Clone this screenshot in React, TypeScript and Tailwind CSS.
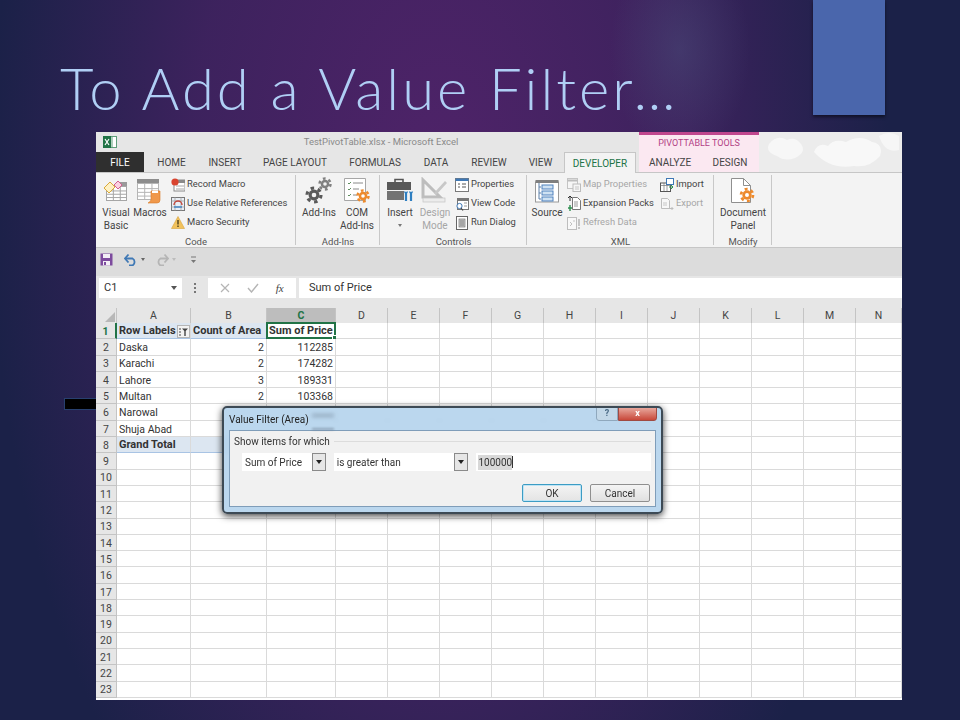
import { ReactNode } from 'react';

const ui = 'font-["Roboto","Noto_Sans",sans-serif]';

const tabs = [
  { label: 'HOME', w: 'w-[55px]' },
  { label: 'INSERT', w: 'w-[52px]' },
  { label: 'PAGE LAYOUT', w: 'w-[88px]' },
  { label: 'FORMULAS', w: 'w-[72px]' },
  { label: 'DATA', w: 'w-[50px]' },
  { label: 'REVIEW', w: 'w-[56px]' },
  { label: 'VIEW', w: 'w-[47px]' },
];

const cols = [
  { name: 'A', w: 'w-[74px]' },
  { name: 'B', w: 'w-[76px]' },
  { name: 'C', w: 'w-[69px]' },
  { name: 'D', w: 'w-[52px]' },
  { name: 'E', w: 'w-[52px]' },
  { name: 'F', w: 'w-[52px]' },
  { name: 'G', w: 'w-[52px]' },
  { name: 'H', w: 'w-[52px]' },
  { name: 'I', w: 'w-[52px]' },
  { name: 'J', w: 'w-[52px]' },
  { name: 'K', w: 'w-[52px]' },
  { name: 'L', w: 'w-[52px]' },
  { name: 'M', w: 'w-[52px]' },
  { name: 'N', w: 'w-[46px]' },
];

const data: Record<number, string[]> = {
  1: ['Row Labels', 'Count of Area', 'Sum of Price'],
  2: ['Daska', '2', '112285'],
  3: ['Karachi', '2', '174282'],
  4: ['Lahore', '3', '189331'],
  5: ['Multan', '2', '103368'],
  6: ['Narowal', '', ''],
  7: ['Shuja Abad', '', ''],
  8: ['Grand Total', '', ''],
};

const rows = Array.from({ length: 23 }, (_, i) => i + 1);

function Gear({ x, y, r, fill, hole = '#f3f3f3' }: { x: number; y: number; r: number; fill: string; hole?: string }) {
  return (
    <g>
      <circle cx={x} cy={y} r={r} fill="none" stroke={fill} strokeWidth={r * 0.45} strokeDasharray={`${r * 0.5} ${r * 0.55}`} />
      <circle cx={x} cy={y} r={r * 0.78} fill={fill} />
      <circle cx={x} cy={y} r={r * 0.33} fill={hole} />
    </g>
  );
}

function SheetLines({ x, y, w, h, color = '#a6a6a6' }: { x: number; y: number; w: number; h: number; color?: string }) {
  return (
    <g stroke={color} strokeWidth="1" fill="#fff">
      <rect x={x + 0.5} y={y + 0.5} width={w - 1} height={h - 1} />
      <path d={`M${x} ${y + h * 0.33}H${x + w}M${x} ${y + h * 0.55}H${x + w}M${x} ${y + h * 0.77}H${x + w}M${x + w * 0.35} ${y}V${y + h}M${x + w * 0.68} ${y}V${y + h}`} />
    </g>
  );
}

function VisualBasicIcon() {
  return (
    <svg width="26" height="24" viewBox="0 0 26 24">
      <SheetLines x={3} y={7} w={21} h={15} />
      <rect x="15" y="3" width="9" height="4" fill="#9a9a9a" />
      <path d="M1 9l6-6 5 5-6 6z" fill="#fff2c4" stroke="#d9a93a" />
      <path d="M11 6l4-4 4 4-4 4z" fill="#fbd2e2" stroke="#d25f8f" />
    </svg>
  );
}

function MacrosIcon() {
  return (
    <svg width="28" height="28" viewBox="0 0 28 28">
      <rect x="1" y="2" width="22" height="4" fill="#8d8d8d" />
      <SheetLines x={1} y={6} w={22} h={17} color="#b5b5b5" />
      <path d="M15 14h9v9q0 3-3 3h-9q2-1 3-3z" fill="#f0984a" stroke="#d97a25" strokeWidth="0.6" />
      <path d="M16 14h6v2h-6z" fill="#fff" />
    </svg>
  );
}

function RecordIcon() {
  return (
    <svg width="14" height="14" viewBox="0 0 14 14">
      <rect x="3" y="2" width="11" height="11" fill="#fff" stroke="#8a8a8a" />
      <path d="M6 2h8v3H6z" fill="#8a8a8a" />
      <path d="M5 8h8M5 11h8" stroke="#a8a8a8" />
      <circle cx="4" cy="4" r="3.6" fill="#d9442f" />
    </svg>
  );
}

function RelativeIcon() {
  return (
    <svg width="14" height="14" viewBox="0 0 14 14">
      <rect x="0.5" y="0.5" width="13" height="13" fill="#e9eef5" stroke="#777" />
      <path d="M0 4h14M4 0v14M10 0v14M0 10h14" stroke="#999" strokeWidth="0.7" />
      <path d="M3 8a4 4 0 0 1 8 0" fill="none" stroke="#c2453a" strokeWidth="1.4" />
      <path d="M3 10h8" stroke="#3b82c4" strokeWidth="1.4" />
    </svg>
  );
}

function WarnIcon() {
  return (
    <svg width="14" height="13" viewBox="0 0 14 13">
      <path d="M7 0.5L13.5 12.5H0.5z" fill="#f2c25c" stroke="#d9a23a" strokeWidth="0.6" />
      <path d="M7 4v4.5M7 9.5v1.5" stroke="#5a4a20" strokeWidth="1.5" />
    </svg>
  );
}

function AddInsIcon() {
  return (
    <svg width="28" height="28" viewBox="0 0 28 28">
      <Gear x={9} y={18} r={7} fill="#5a5a5a" />
      <Gear x={20} y={7} r={5.5} fill="#808080" />
    </svg>
  );
}

function ComIcon() {
  return (
    <svg width="28" height="28" viewBox="0 0 28 28">
      <path d="M1.5 1.5h21v22h-21z" fill="#fff" stroke="#a6a6a6" />
      <path d="M5 6l1 1 2-2M5 12l1 1 2-2M5 18l1 1 2-2" stroke="#5f8f5f" fill="none" />
      <path d="M10 6h10M10 12h6M10 18h4" stroke="#8a8a8a" />
      <Gear x={20} y={19} r={5.5} fill="#ed8a2d" hole="#fff" />
    </svg>
  );
}

function InsertIcon() {
  return (
    <svg width="28" height="28" viewBox="0 0 28 28">
      <path d="M9 5V2.5h8V5" fill="none" stroke="#555" strokeWidth="1.6" />
      <rect x="1" y="5" width="24" height="8" fill="#595959" />
      <rect x="1" y="14" width="17" height="9" fill="#737373" />
      <path d="M20 15v9M25 15v9" stroke="#2f7fc1" strokeWidth="2.2" />
      <path d="M18.5 14.5q1.5 3 3 0M23.5 14.5q1.5 3 3 0" stroke="#2f7fc1" fill="none" strokeWidth="1.4" />
    </svg>
  );
}

function DesignIcon() {
  return (
    <svg width="28" height="28" viewBox="0 0 28 28">
      <path d="M2 3v17h17z" fill="none" stroke="#bdbdbd" strokeWidth="3" />
      <path d="M13 16L24 4l2 2-11 12z" fill="#c8c8c8" />
      <rect x="2" y="21" width="22" height="4" fill="#ececec" stroke="#c4c4c4" strokeWidth="0.7" />
    </svg>
  );
}

function PropsIcon() {
  return (
    <svg width="14" height="14" viewBox="0 0 14 14">
      <rect x="0.5" y="0.5" width="13" height="13" fill="#fff" stroke="#7a7a7a" />
      <rect x="0.5" y="0.5" width="13" height="2.5" fill="#3f78b5" />
      <path d="M3 6h2M3 9h2M7 6h4M7 9h4" stroke="#555" />
    </svg>
  );
}

function ViewCodeIcon() {
  return (
    <svg width="14" height="14" viewBox="0 0 14 14">
      <rect x="2.5" y="1.5" width="11" height="11" fill="#fff" stroke="#777" />
      <path d="M3 3h10" stroke="#777" strokeWidth="2" />
      <path d="M9 6h3M9 9h3" stroke="#999" />
      <circle cx="4.5" cy="9" r="2.6" fill="#fff" stroke="#3f78b5" />
      <path d="M6 11l2 2.5" stroke="#444" strokeWidth="1.2" />
    </svg>
  );
}

function RunDialogIcon() {
  return (
    <svg width="14" height="14" viewBox="0 0 14 14">
      <rect x="1.5" y="0.5" width="11" height="13" fill="#fff" stroke="#666" />
      <rect x="4" y="3" width="6" height="8" fill="#c9c9c9" stroke="#777" strokeWidth="0.7" />
      <path d="M5 5h4M5 7h4M5 9h4" stroke="#666" strokeWidth="0.7" />
    </svg>
  );
}

function SourceIcon() {
  return (
    <svg width="24" height="24" viewBox="0 0 24 24">
      <rect x="0.5" y="3" width="23" height="20" fill="#fff" stroke="#9a9a9a" />
      <rect x="0.5" y="1" width="23" height="3" fill="#7f7f7f" />
      <path d="M4 4v16M4 8h2M4 14h2M4 20h2" stroke="#5a7fa8" fill="none" />
      <rect x="7" y="6" width="11" height="4" fill="#cfe2f3" stroke="#4f81bd" />
      <rect x="7" y="12" width="11" height="4" fill="#cfe2f3" stroke="#4f81bd" />
      <rect x="7" y="18" width="11" height="4" fill="#cfe2f3" stroke="#4f81bd" />
    </svg>
  );
}

function MapIcon() {
  return (
    <svg width="14" height="14" viewBox="0 0 14 14">
      <rect x="0.5" y="0.5" width="10" height="10" fill="#f6f6f6" stroke="#c4c4c4" />
      <path d="M0.5 2.5h10" stroke="#bcbcbc" strokeWidth="2" />
      <rect x="6" y="6" width="7.5" height="7.5" fill="#f6f6f6" stroke="#bcbcbc" />
      <path d="M8 9h4M8 11h4" stroke="#c6c6c6" />
    </svg>
  );
}

function ExpansionIcon() {
  return (
    <svg width="14" height="15" viewBox="0 0 14 15">
      <path d="M5.5 1.5h5l3 3v9h-8z" fill="#fff" stroke="#777" />
      <path d="M7 6h4M7 8h4M7 10h4" stroke="#999" />
      <path d="M3 0v5M1 2l2-2 2 2" stroke="#333" fill="none" />
      <path d="M3 9v6M1 12h4" stroke="#2f8f4f" strokeWidth="1.4" />
    </svg>
  );
}

function RefreshIcon() {
  return (
    <svg width="14" height="14" viewBox="0 0 14 14">
      <rect x="0.5" y="1.5" width="9" height="12" fill="#f8f8f8" stroke="#bdbdbd" />
      <path d="M3 6l2 2-2 2M6 5h2" stroke="#c2c2c2" fill="none" />
      <path d="M12 3v7M12 11v2" stroke="#b9b9b9" strokeWidth="1.6" />
    </svg>
  );
}

function ImportIcon() {
  return (
    <svg width="14" height="14" viewBox="0 0 14 14">
      <rect x="0.5" y="5" width="10" height="8.5" fill="#fff" stroke="#555" />
      <path d="M0.5 7.5h10M4 5v8M7 5v8" stroke="#777" strokeWidth="0.7" />
      <rect x="6.5" y="0.5" width="7" height="6" fill="#fff" stroke="#3f78b5" />
      <path d="M9 9h4M11 7l2 2-2 2" stroke="#2f8f4f" fill="none" />
    </svg>
  );
}

function ExportIcon() {
  return (
    <svg width="14" height="14" viewBox="0 0 14 14">
      <path d="M1.5 1.5h6l2 2v8h-8z" fill="#f7f7f7" stroke="#bdbdbd" />
      <path d="M3 6h4M3 8h4" stroke="#c6c6c6" />
      <path d="M9 11.5h4M11.5 10l1.5 1.5-1.5 1.5" stroke="#bcbcbc" fill="none" />
    </svg>
  );
}

function DocPanelIcon() {
  return (
    <svg width="30" height="28" viewBox="0 0 30 28">
      <path d="M3.5 1.5h12l7 7v17h-19z" fill="#fff" stroke="#8f8f8f" />
      <path d="M15.5 1.5v7h7" fill="none" stroke="#8f8f8f" />
      <Gear x={19} y={18} r={6} fill="#ed8a2d" hole="#fff" />
    </svg>
  );
}

function BigButton({ icon, lines, w, muted, menu }: { icon: ReactNode; lines: string[]; w: string; muted?: boolean; menu?: boolean }) {
  return (
    <div className={`flex shrink-0 flex-col items-center ${w} ${muted ? 'text-[#a6a6a6]' : 'text-[#444]'}`}>
      <div className="flex h-[31px] items-center justify-center">{icon}</div>
      {lines.map(l => (
        <div key={l} className="h-[13px] whitespace-nowrap text-center text-[10px] leading-[13px]">
          {l}
        </div>
      ))}
      {menu && <div className="mt-[5px] size-0 border-x-[2.5px] border-t-[3px] border-x-transparent border-t-[#777]" />}
    </div>
  );
}

function SmallButton({ icon, label, muted }: { icon: ReactNode; label: string; muted?: boolean }) {
  return (
    <div className={`flex h-[19px] items-center gap-[2px] whitespace-nowrap text-[9.4px] ${muted ? 'text-[#a6a6a6]' : 'text-[#444]'}`}>
      <div className="flex w-[14px] justify-center">{icon}</div>
      {label}
    </div>
  );
}

function RibbonGroup({ w, label, pad, children }: { w: string; label: string; pad: string; children: ReactNode }) {
  return (
    <div className={`relative flex h-[76px] shrink-0 flex-col ${w}`}>
      <div className={`flex h-[63px] pt-[2px] ${pad}`}>{children}</div>
      <div className="text-center text-[9.5px] leading-[12px] text-[#555]">{label}</div>
      <div className="absolute right-0 top-[2px] h-[70px] w-px bg-[#c8c8c8]" />
    </div>
  );
}

function Ribbon() {
  return (
    <div className="flex h-[76px] border-y border-[#c6c6c6] bg-[#f3f3f3]">
      <RibbonGroup w="w-[200px]" label="Code" pad="pl-[3px]">
        <BigButton icon={<VisualBasicIcon />} lines={['Visual', 'Basic']} w="w-[34px]" />
        <BigButton icon={<MacrosIcon />} lines={['Macros']} w="w-[34px]" />
        <div className="ml-[4px] flex flex-col">
          <SmallButton icon={<RecordIcon />} label="Record Macro" />
          <SmallButton icon={<RelativeIcon />} label="Use Relative References" />
          <SmallButton icon={<WarnIcon />} label="Macro Security" />
        </div>
      </RibbonGroup>
      <RibbonGroup w="w-[84px]" label="Add-Ins" pad="pl-[4px]">
        <BigButton icon={<AddInsIcon />} lines={['Add-Ins']} w="w-[38px]" />
        <BigButton icon={<ComIcon />} lines={['COM', 'Add-Ins']} w="w-[38px]" />
      </RibbonGroup>
      <RibbonGroup w="w-[147px]" label="Controls" pad="pl-[3px]">
        <BigButton icon={<InsertIcon />} lines={['Insert']} w="w-[34px]" menu />
        <BigButton icon={<DesignIcon />} lines={['Design', 'Mode']} w="w-[36px]" muted />
        <div className="ml-[2px] flex flex-col">
          <SmallButton icon={<PropsIcon />} label="Properties" />
          <SmallButton icon={<ViewCodeIcon />} label="View Code" />
          <SmallButton icon={<RunDialogIcon />} label="Run Dialog" />
        </div>
      </RibbonGroup>
      <RibbonGroup w="w-[187px]" label="XML" pad="pl-[3px]">
        <BigButton icon={<SourceIcon />} lines={['Source']} w="w-[34px]" />
        <div className="ml-[3px] flex w-[93px] flex-col">
          <SmallButton icon={<MapIcon />} label="Map Properties" muted />
          <SmallButton icon={<ExpansionIcon />} label="Expansion Packs" />
          <SmallButton icon={<RefreshIcon />} label="Refresh Data" muted />
        </div>
        <div className="flex flex-col">
          <SmallButton icon={<ImportIcon />} label="Import" />
          <SmallButton icon={<ExportIcon />} label="Export" muted />
        </div>
      </RibbonGroup>
      <RibbonGroup w="w-[58px]" label="Modify" pad="pl-[3px]">
        <BigButton icon={<DocPanelIcon />} lines={['Document', 'Panel']} w="w-[52px]" />
      </RibbonGroup>
    </div>
  );
}

function TitleArea() {
  return (
    <div className="relative h-[40px] bg-[#e6e6e6]">
      <svg className="absolute right-0 top-0" width="143" height="40" viewBox="0 0 143 40">
        <rect width="143" height="40" fill="#ececec" />
        <path d="M10 12q8-10 18-4 8-4 14 4 6 8-6 14-10 4-18-2-12-4-8-12z" fill="#f7f7f7" />
        <path d="M55 20q4-10 14-6 6-8 18-4 14-8 26 0 12 2 8 14-10 12-26 10-24 4-40-14z" fill="#f8f8f8" />
        <path d="M120 4q10-6 20 0v14q-14 4-20-14z" fill="#f6f6f6" />
      </svg>
      <div className="relative flex h-[20px] items-center">
        <div className="flex w-[543px] items-center pl-[7px]">
          <svg width="14" height="14" viewBox="0 0 14 14">
            <rect x="5" y="1.5" width="8.5" height="11" fill="#fff" stroke="#5f9f7a" />
            <path d="M9 2v10" stroke="#5f9f7a" />
            <rect x="0" y="1" width="8" height="12" fill="#217346" />
            <path d="M2 4l4 6M6 4l-4 6" stroke="#fff" strokeWidth="1.2" />
          </svg>
          <div className="ml-[6px] flex-1 text-center text-[9.5px] text-[#8a8a8a]">TestPivotTable.xlsx - Microsoft Excel</div>
        </div>
        <div className="flex h-[20px] w-[120px] items-center justify-center border-t-[3px] border-[#c0468e] bg-[#fbe8f1] text-[9px] text-[#b23f85]">
          PIVOTTABLE TOOLS
        </div>
      </div>
      <div className="relative flex h-[20px] items-stretch text-[10px] text-[#444]">
        <div className="flex w-[48px] items-center justify-center bg-[#2f2f2f] text-white">FILE</div>
        {tabs.map(t => (
          <div key={t.label} className={`flex items-center justify-center ${t.w}`}>
            {t.label}
          </div>
        ))}
        <div className="z-10 -mb-px flex w-[72px] items-center justify-center border-x border-t border-[#c6c6c6] bg-[#f3f3f3] text-[#217346]">
          DEVELOPER
        </div>
        <div className="w-[3px]" />
        <div className="flex w-[62px] items-center justify-center bg-[#fbe8f1]">ANALYZE</div>
        <div className="flex w-[58px] items-center justify-center bg-[#fbe8f1]">DESIGN</div>
      </div>
    </div>
  );
}

function Toolbar() {
  return (
    <div className="flex h-[28px] items-start bg-[#dcdcdc] pl-[4px] pt-[5px]">
      <svg width="13" height="13" viewBox="0 0 13 13">
        <path d="M0.5 0.5h12v12h-12z" fill="#7d4b9e" />
        <rect x="3" y="1" width="7" height="4" fill="#f3eef6" />
        <rect x="3" y="8" width="7" height="4.5" fill="#f3eef6" />
        <rect x="4" y="9" width="2" height="3" fill="#7d4b9e" />
      </svg>
      <svg className="ml-[11px]" width="14" height="13" viewBox="0 0 14 13">
        <path d="M1 5.5h7.5a4 4 0 0 1 0 7H5" fill="none" stroke="#3f78b5" strokeWidth="1.8" />
        <path d="M4.5 1.5L1 5.5l3.5 4" fill="none" stroke="#3f78b5" strokeWidth="1.8" />
      </svg>
      <div className="ml-[3px] mt-[5px] size-0 border-x-[2.5px] border-t-[3px] border-x-transparent border-t-[#666]" />
      <svg className="ml-[10px]" width="14" height="13" viewBox="0 0 14 13">
        <path d="M13 5.5H5.5a4 4 0 0 0 0 7H9" fill="none" stroke="#b5b5b5" strokeWidth="1.8" />
        <path d="M9.5 1.5L13 5.5l-3.5 4" fill="none" stroke="#b5b5b5" strokeWidth="1.8" />
      </svg>
      <div className="ml-[3px] mt-[5px] size-0 border-x-[2.5px] border-t-[3px] border-x-transparent border-t-[#bcbcbc]" />
      <svg className="ml-[14px] mt-[3px]" width="7" height="8" viewBox="0 0 7 8">
        <path d="M1 1h5" stroke="#777" />
        <path d="M1 4h5L3.5 7z" fill="#777" />
      </svg>
    </div>
  );
}

function FormulaBar() {
  return (
    <div className="flex h-[32px] items-start bg-[#e6e6e6] pl-[3px] pt-[2px] text-[11px] text-[#333]">
      <div className="flex h-[20px] w-[83px] items-center justify-between bg-white px-[5px]">
        C1
        <div className="size-0 border-x-[3px] border-t-[4px] border-x-transparent border-t-[#555]" />
      </div>
      <div className="flex h-[20px] w-[26px] flex-col items-center justify-center gap-[2px]">
        <span className="size-[2px] bg-[#777]" />
        <span className="size-[2px] bg-[#777]" />
        <span className="size-[2px] bg-[#777]" />
      </div>
      <div className="flex h-[20px] w-[88px] items-center justify-around bg-white px-[4px]">
        <svg width="10" height="10" viewBox="0 0 10 10"><path d="M1 1l8 8M9 1L1 9" stroke="#b5b5b5" strokeWidth="1.2" /></svg>
        <svg width="12" height="10" viewBox="0 0 12 10"><path d="M1 5l3.5 4L11 1" stroke="#b5b5b5" strokeWidth="1.4" fill="none" /></svg>
        <span className="font-['Liberation_Serif',serif] text-[11px] italic text-[#444]">fx</span>
      </div>
      <div className="ml-[3px] flex h-[20px] flex-1 items-center bg-white pl-[10px]">Sum of Price</div>
    </div>
  );
}

function Cell({ col, row }: { col: number; row: number }) {
  const value = data[row]?.[col] ?? '';
  const tint = (row === 1 && col < 2) || (row === 8 && col < 3);
  const bold = row === 1 || row === 8;
  const alignRight = col > 0 && row > 1;
  return (
    <div
      className={`relative flex h-full shrink-0 items-center overflow-visible whitespace-nowrap border-b border-r border-[#dadada] px-[2px] pt-[2px] ${cols[col].w} ${
        tint ? 'border-b-[#a9c4e4] bg-[#dce6f1]' : 'bg-white'
      } ${bold ? 'text-[11px] font-bold' : ''} ${alignRight ? 'justify-end' : ''}`}
    >
      {value}
      {row === 1 && col === 0 && (
        <span className="absolute right-0 top-[2px] flex h-[13px] w-[13px] items-center justify-center border border-[#b5b5b5] bg-[#f2f2f2]">
          <svg width="9" height="8" viewBox="0 0 9 8">
            <path d="M1 0v2M1 3v2M1 6v2" stroke="#444" />
            <path d="M3 0.5h6L6.7 3v5H5.3V3z" fill="#444" />
          </svg>
        </span>
      )}
      {row === 1 && col === 2 && (
        <>
          <span className="absolute -inset-px border-2 border-[#217346]" />
          <span className="absolute -bottom-[2px] -right-[2px] size-[5px] border border-white bg-[#217346]" />
        </>
      )}
    </div>
  );
}

function Sheet() {
  return (
    <div className="flex-1 overflow-hidden bg-white text-[10.5px] text-[#333]">
      <div className="flex h-[15px] bg-[#e6e6e6]">
        <div className="flex w-[21px] shrink-0 items-end justify-end border-r border-[#c4c4c4] p-[1px]">
          <div className="size-0 border-b-[10px] border-l-[10px] border-b-[#b8b8b8] border-l-transparent" />
        </div>
        {cols.map(c => (
          <div
            key={c.name}
            className={`flex shrink-0 items-center justify-center border-r border-[#c4c4c4] ${c.w} ${
              c.name === 'C' ? 'bg-[#bdbdbd] font-bold text-[#217346]' : 'text-[#444]'
            }`}
          >
            {c.name}
          </div>
        ))}
      </div>
      {rows.map(r => (
        <div key={r} className="flex h-[16.3px]">
          <div
            className={`flex w-[21px] shrink-0 items-center justify-center border-b border-r bg-[#e6e6e6] pt-[2px] ${
              r === 1 ? 'border-r-2 border-b-[#c4c4c4] border-r-[#217346] font-bold text-[#217346]' : 'border-[#c4c4c4] text-[#444]'
            }`}
          >
            {r}
          </div>
          {cols.map((c, i) => (
            <Cell key={c.name} col={i} row={r} />
          ))}
        </div>
      ))}
    </div>
  );
}

function Combo({ w, label }: { w: string; label: string }) {
  return (
    <div className={`flex h-[18px] items-center justify-between bg-white pl-[3px] ${w}`}>
      {label}
      <div className="flex h-[18px] w-[14px] items-center justify-center border border-[#8a8a8a] bg-[#e6e6e6]">
        <div className="size-0 border-x-[3.5px] border-t-[4px] border-x-transparent border-t-[#222]" />
      </div>
    </div>
  );
}

function ValueFilterDialog() {
  return (
    <div className="absolute left-[126px] top-[274px] h-[108px] w-[441px] overflow-hidden rounded-[5px] border-2 border-[#3d4a55] bg-[#b4d3ec]/90 px-[5px] text-[9.5px] text-[#333] shadow-[0_2px_7px_rgba(0,0,0,0.75)] backdrop-blur-[2px]">
      <div className="absolute left-[88px] top-[6px] h-[3px] w-[22px] bg-[#6f8294]/60 blur-[2px]" />
      <div className="absolute left-[88px] top-[20px] h-[2px] w-[22px] bg-[#6f8294]/60 blur-[1px]" />
      <div className="absolute right-[4px] top-[-1px] flex h-[14px]">
        <div className="flex w-[22px] items-center justify-center rounded-bl-[3px] border border-[#8fa8bd] bg-[#c3d8e8] text-[9px] font-bold text-[#4a6a85]">?</div>
        <div className="flex w-[39px] items-center justify-center rounded-br-[3px] border border-[#a04a42] bg-[linear-gradient(#e8a79c,#c8483a)] text-[9px] font-bold text-white">x</div>
      </div>
      <div className="flex h-[22px] items-center text-[10px] text-[#222]">Value Filter (Area)</div>
      <div className="h-[77px] border border-[#7f9db9] bg-[#f1f1f1] px-[4px]">
        <div className="flex h-[21px] items-center gap-[4px]">
          <span className="whitespace-nowrap text-[10px]">Show items for which</span>
          <div className="h-px flex-1 bg-[#dcdcdc]" />
        </div>
        <div className="flex gap-[8px] pl-[8px] pt-[1px] text-[10px]">
          <Combo w="w-[84px]" label="Sum of Price" />
          <Combo w="w-[135px]" label="is greater than" />
          <div className="flex h-[18px] w-[175px] items-center bg-white pl-[2px]">
            <span className="bg-[#d8d8d8]">100000</span>
            <span className="h-[12px] w-px bg-[#333]" />
          </div>
        </div>
        <div className="mt-[13px] flex justify-end gap-[8px] pr-px text-[10px]">
          <div className="flex h-[18px] w-[60px] items-center justify-center rounded-[2px] border border-[#3c9cc4] bg-[linear-gradient(#f4f4f4,#e4e4e4)] shadow-[inset_0_0_0_1px_#bfe4f4]">OK</div>
          <div className="flex h-[18px] w-[60px] items-center justify-center rounded-[2px] border border-[#8f8f8f] bg-[linear-gradient(#f4f4f4,#e0e0e0)]">Cancel</div>
        </div>
      </div>
    </div>
  );
}

export default function App() {
  return (
    <div className="relative h-[720px] w-[960px] overflow-hidden bg-[radial-gradient(ellipse_70px_110px_at_680px_50px,rgba(75,82,125,0.45),transparent),radial-gradient(ellipse_450px_820px_at_440px_190px,#4f2369,rgba(79,35,105,0.65)_55%,rgba(79,35,105,0)),linear-gradient(#1b2148,#1b2148)]">
      <div className="absolute left-[64px] top-[398px] h-[12px] w-[40px] border border-[#28406f] bg-black" />
      <header className="flex h-[132px] justify-between pl-[60px] pr-[75px]">
        <h1 className="whitespace-nowrap pt-[49px] font-['Lato',sans-serif] text-[58px] font-light leading-[78px] tracking-[3px] text-[#b0cff5]">
          To Add a Value Filter…
        </h1>
        <div className="h-[115px] w-[72px] bg-[#4a66ac] shadow-[0_2px_3px_rgba(0,0,0,0.5)]" />
      </header>
      <div className={`relative ml-[96px] flex h-[568px] w-[806px] flex-col blur-[0.3px] ${ui}`}>
        <TitleArea />
        <Ribbon />
        <Toolbar />
        <FormulaBar />
        <Sheet />
        <ValueFilterDialog />
      </div>
    </div>
  );
}
